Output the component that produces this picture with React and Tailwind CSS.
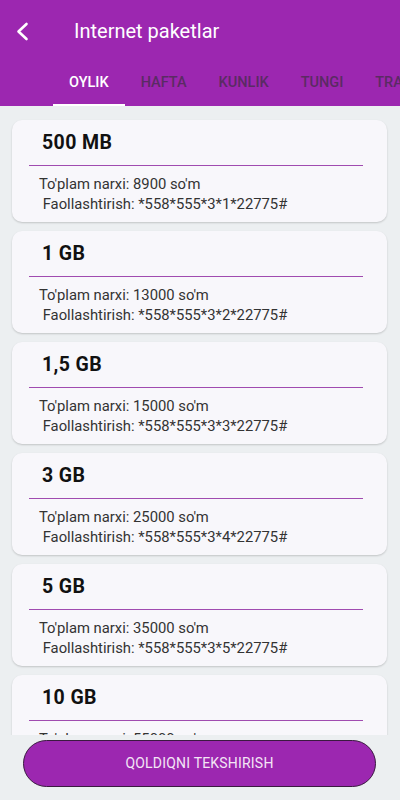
import React from 'react';

const packages = [
  { size: '500 MB', price: '8900', code: '*558*555*3*1*22775#' },
  { size: '1 GB', price: '13000', code: '*558*555*3*2*22775#' },
  { size: '1,5 GB', price: '15000', code: '*558*555*3*3*22775#' },
  { size: '3 GB', price: '25000', code: '*558*555*3*4*22775#' },
  { size: '5 GB', price: '35000', code: '*558*555*3*5*22775#' },
  { size: '10 GB', price: '55000', code: '*558*555*3*6*22775#' },
];

const tabs = ['OYLIK', 'HAFTA', 'KUNLIK', 'TUNGI', 'TRAFIK'];

function PackageCard({ pkg }) {
  return (
    <div className="shrink-0 h-[102px] ml-3 mr-[13px] rounded-[10px] bg-[#f8f7fb] shadow-[0_1px_2px_rgba(0,0,0,0.18)] pt-[12px]">
      <div className="pl-[30px] h-[22px] leading-[22px] text-[19.5px] font-bold text-[#111] tracking-[0.4px]">
        {pkg.size}
      </div>
      <div className="mt-[11px] ml-[17px] mr-[24px] h-px bg-[#a04bb0]" />
      <div className="mt-[8px] pl-[27px] text-[14.8px] leading-[20px] text-[#333] whitespace-pre">
        <div>To'plam narxi: {pkg.price} so'm</div>
        <div>{' Faollashtirish: ' + pkg.code}</div>
      </div>
    </div>
  );
}

export default function App() {
  return (
    <div
      className="w-[400px] h-[800px] flex flex-col bg-[#eceff1] overflow-hidden"
      style={{ fontFamily: 'Roboto, "Liberation Sans", sans-serif' }}
    >
      {/* header */}
      <div className="shrink-0 bg-[#9c27b0]">
        <div className="h-[58px] flex items-center">
          <div className="w-[74px] pl-[14px] flex items-center mt-[4px]">
            <svg width="18" height="20" viewBox="0 0 18 20">
              <path d="M12.5 3 L4.5 10.5 L12.5 18" fill="none" stroke="#fff" strokeWidth="2.6" strokeLinecap="round" strokeLinejoin="round" />
            </svg>
          </div>
          <span className="text-white text-[20px] leading-[24px] mt-[4px]">Internet paketlar</span>
        </div>
        <div className="h-[48px] flex pl-[53px] whitespace-nowrap">
          {tabs.map((t, i) => (
            <div
              key={t}
              className={`relative shrink-0 px-4 flex items-center text-[14.5px] font-medium ${i === 0 ? 'text-white' : 'text-[#5a2b63]'}`}
            >
              <span className="mt-[1px]">{t}</span>
              {i === 0 && <div className="absolute left-0 right-0 bottom-0 h-[2px] bg-white" />}
            </div>
          ))}
        </div>
      </div>

      {/* list */}
      <div className="h-[629px] shrink-0 overflow-hidden flex flex-col gap-[9px] pt-[14px]">
        {packages.map((p) => (
          <PackageCard key={p.size} pkg={p} />
        ))}
      </div>

      {/* button */}
      <div className="flex-1 pt-[5px] px-[23px]">
        <button className="w-[353px] h-[47px] rounded-full bg-[#9c27b0] border border-[#3a1a40] text-[#f3e5f5] text-[14px] tracking-[0.2px] flex items-center justify-center">
          QOLDIQNI TEKSHIRISH
        </button>
      </div>
    </div>
  );
}
